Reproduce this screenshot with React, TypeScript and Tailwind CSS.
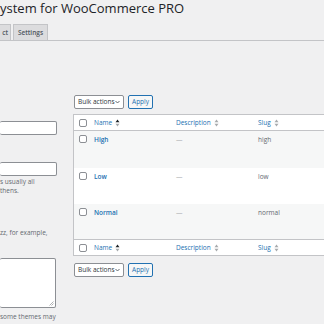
import React from "react";

const font = { fontFamily: '"Segoe UI", "Open Sans", "Noto Sans", sans-serif' };

function SortIcon({ active }: { active?: boolean }) {
  return (
    <svg width="5" height="8" viewBox="0 0 5 8" className="ml-[3px] inline-block">
      <path d="M2.5 0.5 L4.5 3.3 L0.5 3.3 Z" fill={active ? "#1d2327" : "#a7aaad"} />
      <path d="M2.5 7.5 L4.5 4.7 L0.5 4.7 Z" fill="#a7aaad" />
    </svg>
  );
}

function Check() {
  return <span className="block h-[8px] w-[8px] rounded-[2px] border border-[#8c8f94] bg-white" />;
}

function BulkBar() {
  return (
    <div className="flex gap-[4px]">
      <div className="flex h-[14px] w-[50px] items-center justify-between whitespace-nowrap rounded-[2px] border border-[#8c8f94] bg-white pl-[3px] pr-[3px] text-[6.5px] leading-none text-[#2c3338]">
        <span>Bulk actions</span>
        <svg width="5" height="4" viewBox="0 0 5 4">
          <path d="M0.5 1 L2.5 3 L4.5 1" fill="none" stroke="#50575e" strokeWidth="0.9" />
        </svg>
      </div>
      <div className="flex h-[14px] w-[25px] items-center justify-center rounded-[2px] border border-[#2271b1] bg-[#f6f7f7] text-[6.5px] leading-none text-[#2271b1]">
        Apply
      </div>
    </div>
  );
}

function HeadRow({ top }: { top?: boolean }) {
  return (
    <div
      className={`flex h-[16px] items-center bg-white ${top ? "border-b" : "border-t"} border-[#c3c4c7] text-[6.5px] text-[#2271b1]`}
    >
      <div className="w-[20px] pl-[5px]">
        <Check />
      </div>
      <div className="flex w-[82px] items-center">
        Name
        <SortIcon active />
      </div>
      <div className="flex w-[82px] items-center">
        Description
        <SortIcon />
      </div>
      <div className="flex items-center">
        Slug
        <SortIcon />
      </div>
    </div>
  );
}

const rows = [
  { name: "High", slug: "high", h: "h-[37px]", bg: "bg-[#f6f7f7]" },
  { name: "Low", slug: "low", h: "h-[36px]", bg: "bg-white" },
  { name: "Normal", slug: "normal", h: "h-[35px]", bg: "bg-[#f6f7f7]" },
];

export default function App() {
  return (
    <div style={font} className="h-[324px] w-[324px] overflow-hidden bg-[#f0f0f1]">
      <h1 className="pt-[1px] text-[13px] leading-[15px] text-[#1d2327]">ystem for WooCommerce PRO</h1>

      <div className="mt-[8px] flex h-[17px] items-end gap-[2px] border-b border-[#c3c4c7]">
        <div className="flex h-[16px] w-[11px] items-center justify-end border border-b-0 border-l-0 border-[#c3c4c7] bg-[#dcdcde] pr-[2px] text-[6.5px] font-semibold text-[#50575e]">
          ct
        </div>
        <div className="flex h-[16px] w-[35px] items-center justify-center border border-b-0 border-[#c3c4c7] bg-[#dcdcde] text-[6.5px] font-semibold text-[#50575e]">
          Settings
        </div>
      </div>

      <div className="mt-[54px] flex">
        <div className="w-[57px] shrink-0 text-[6.5px] leading-[9px] text-[#646970]">
          <div className="mt-[26px] h-[14px] rounded-[2px] border border-l-0 border-[#8c8f94] bg-white" />
          <div className="mt-[27px] h-[14px] rounded-[2px] border border-l-0 border-[#8c8f94] bg-white" />
          <p className="mt-[1px] whitespace-nowrap">s usually all</p>
          <p className="whitespace-nowrap">thens.</p>
          <p className="mt-[33px] whitespace-nowrap">zz, for example,</p>
          <div className="relative mt-[21px] h-[50px] w-[56px] rounded-[2px] border border-l-0 border-[#8c8f94] bg-white">
            <svg width="5" height="5" viewBox="0 0 5 5" className="absolute bottom-[1px] right-[1px]">
              <path d="M4.5 0.5 L0.5 4.5 M4.5 2.5 L2.5 4.5" stroke="#8c8f94" strokeWidth="0.7" />
            </svg>
          </div>
          <p className="mt-[4px] whitespace-nowrap">some themes may</p>
        </div>

        <div className="ml-[16px] w-[300px] shrink-0">
          <div className="pl-[1px]">
            <BulkBar />
          </div>
          <div className="mt-[5px] border border-r-0 border-[#c3c4c7] text-[6.5px]">
            <HeadRow top />
            {rows.map((r) => (
              <div key={r.name} className={`flex items-start ${r.h} ${r.bg} pt-[4px]`}>
                <div className="w-[20px] pl-[5px]">
                  <Check />
                </div>
                <div className="w-[82px] font-semibold leading-[9px] text-[#2271b1]">{r.name}</div>
                <div className="w-[82px] leading-[9px] text-[#a7aaad]">—</div>
                <div className="leading-[9px] text-[#646970]">{r.slug}</div>
              </div>
            ))}
            <HeadRow />
          </div>
          <div className="mt-[7px] pl-[1px]">
            <BulkBar />
          </div>
        </div>
      </div>
    </div>
  );
}
